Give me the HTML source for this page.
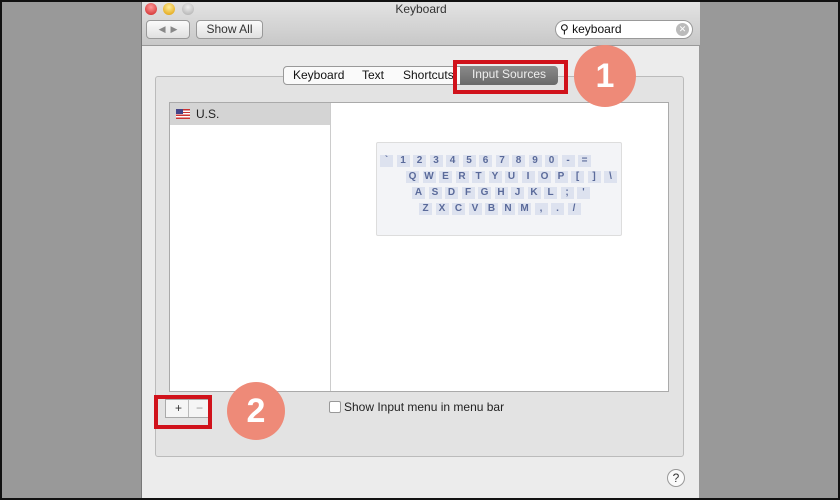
<!DOCTYPE html>
<html><head><style>
*{margin:0;padding:0;box-sizing:border-box}
body{width:840px;height:500px;background:#999;position:relative;overflow:hidden;font-family:"Liberation Sans",sans-serif}
.abs{position:absolute}
.frame{left:0;top:0;width:840px;height:500px;border:2px solid #111;pointer-events:none}
.win{left:141px;top:0;width:558px;height:498px;background:#ececec;border-left:1px solid #777}
.tb{left:0;top:0;width:558px;height:46px;background:linear-gradient(#e4e4e4,#c8c8c8);border-bottom:1px solid #999}
.dot{width:12px;height:12px;border-radius:50%;top:3px}
.btn{background:linear-gradient(#fbfbfb,#e0e0e0);border:1px solid #999;border-radius:4px;font-size:12px;color:#333;text-align:center}
.key{position:absolute;width:13px;height:12px;background:#dde2ef;font-size:10px;font-weight:bold;color:#5a6a9a;text-align:center;line-height:12px}
.red{border:4px solid #d0121b}
.circ{border-radius:50%;background:#ee8a78;color:#fff;font-size:34px;font-weight:bold;text-align:center}
</style></head><body>
<div class="abs win">
 <div class="abs tb">
  <div class="abs dot" style="left:3px;background:radial-gradient(circle at 50% 35%,#f99,#c22)"></div>
  <div class="abs dot" style="left:21px;background:radial-gradient(circle at 50% 35%,#fe9,#d90)"></div>
  <div class="abs dot" style="left:40px;background:radial-gradient(circle at 50% 35%,#eee,#aaa)"></div>
  <div class="abs" style="left:0;top:2px;width:558px;text-align:center;font-size:12px;color:#333">Keyboard</div>
  <div class="abs btn" style="left:4px;top:20px;width:44px;height:19px;font-size:9px;line-height:17px;color:#888">◀ &nbsp;▶</div>
  <div class="abs btn" style="left:54px;top:20px;width:67px;height:19px;line-height:17px">Show All</div>
  <div class="abs" style="left:413px;top:20px;width:138px;height:19px;background:#fff;border:1px solid #999;border-radius:10px;font-size:12px;line-height:17px;padding-left:4px;color:#111">⚲ keyboard<span style="position:absolute;right:3px;top:2px;width:13px;height:13px;border-radius:50%;background:#bbb;color:#fff;font-size:9px;line-height:13px;text-align:center">✕</span></div>
 </div>
 <div class="abs" style="left:13px;top:76px;width:529px;height:381px;background:#e3e3e3;border:1px solid #bbb;border-radius:3px"></div>
 <div class="abs" style="left:141px;top:66px;width:274px;height:19px;border:1px solid #999;border-radius:4px;background:#fafafa;font-size:12px;line-height:17px;color:#111">
  <span class="abs" style="left:9px">Keyboard</span><span class="abs" style="left:78px">Text</span><span class="abs" style="left:119px">Shortcuts</span>
  <span class="abs" style="left:176px;top:-1px;width:98px;height:19px;background:linear-gradient(#8a8a8a,#6a6a6a);color:#eee;text-align:center;border-radius:0 4px 4px 0">Input Sources</span>
 </div>
 <div class="abs" style="left:27px;top:102px;width:500px;height:290px;background:#fff;border:1px solid #aaa"></div>
 <div class="abs" style="left:28px;top:103px;width:161px;height:22px;background:#d4d4d4;font-size:12px;line-height:22px;padding-left:26px;color:#222">U.S.</div>
 <div class="abs" style="left:34px;top:109px;width:14px;height:10px;background:repeating-linear-gradient(#c33 0 1.4px,#fff 1.4px 2.8px)"><div style="width:7px;height:5px;background:#448"></div></div>
 <div class="abs" style="left:188px;top:103px;width:1px;height:288px;background:#ccc"></div>
</div>
<div class="abs" style="left:376px;top:142px;width:246px;height:94px;background:#f3f4f7;border:1px solid #ddd;border-radius:2px"></div>
<div id="keys"></div>
<div class="abs red" style="left:453px;top:60px;width:115px;height:34px"></div>
<div class="abs circ" style="left:574px;top:45px;width:62px;height:62px;line-height:62px">1</div>
<div class="abs" style="left:165px;top:399px;width:45px;height:19px;border:1px solid #aaa;background:#f5f5f5;font-size:12px;line-height:17px;color:#333"><span class="abs" style="left:9px">+</span><span class="abs" style="left:22px;width:1px;height:17px;background:#bbb"></span><span class="abs" style="left:30px;color:#999">−</span></div>
<div class="abs red" style="left:154px;top:395px;width:58px;height:34px"></div>
<div class="abs circ" style="left:227px;top:382px;width:58px;height:58px;line-height:58px">2</div>
<div class="abs" style="left:329px;top:401px;width:12px;height:12px;border:1px solid #999;border-radius:2px;background:#fff"></div>
<div class="abs" style="left:344px;top:400px;font-size:12px;color:#222">Show Input menu in menu bar</div>
<div class="abs" style="left:667px;top:469px;width:18px;height:18px;border:1px solid #999;border-radius:50%;background:#fafafa;font-size:12px;text-align:center;line-height:16px;color:#333">?</div>
<div class="abs frame"></div>
<script>
var rows=[["`1234567890-=",380,155],["QWERTYUIOP[]\\",406,171],["ASDFGHJKL;'",412,187],["ZXCVBNM,./",419,203]];
var h="";rows.forEach(function(r){for(var i=0;i<r[0].length;i++){h+='<div class="key" style="left:'+(r[1]+i*16.5)+'px;top:'+r[2]+'px">'+r[0][i].replace("<","&lt;")+'</div>';}});
document.getElementById("keys").innerHTML=h;
</script>
</body></html>
